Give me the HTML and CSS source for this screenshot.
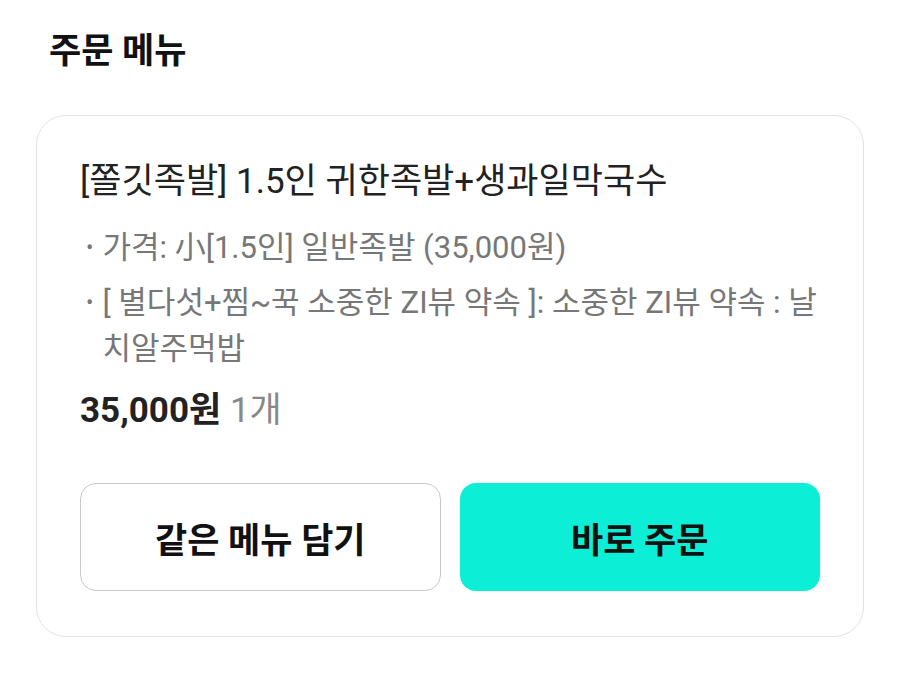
FILE: index.html
```html
<!DOCTYPE html>
<html lang="ko">
<head>
  <meta charset="UTF-8" />
  <meta name="viewport" content="width=device-width, initial-scale=1.0"/>
  <title>주문 메뉴</title>
  <link rel="stylesheet" href="styles.css">
</head>
<body>

<div class="page">
  <h2 class="section-title">주문 메뉴</h2>

  <div class="order-card">
    <div class="menu-name">[쫄깃족발] 1.5인 귀한족발+생과일막국수</div>

    <ul class="options">
      <li><span class="dot">•</span><span>가격: 小[1.5인] 일반족발 (35,000원)</span></li>
      <li><span class="dot">•</span><span>[ 별다섯+찜~꾹 소중한 ZI뷰 약속 ]: 소중한 ZI뷰 약속 : 날치알주먹밥</span></li>
    </ul>

    <div class="price">
      <strong>35,000원</strong> <span class="qty">1개</span>
    </div>

    <div class="actions">
      <button type="button" class="btn btn-outline">같은 메뉴 담기</button>
      <button type="button" class="btn btn-primary">바로 주문</button>
    </div>
  </div>
</div>

</body>
</html>
```

FILE: styles.css
```css
body {
  margin: 0;
  background: #fff;
  font-family: Roboto, "Noto Sans CJK KR", sans-serif;
  color: #222;
}

.page {
  padding: 30px 36px;
}

.section-title {
  margin: 0 0 41px 13px;
  font-size: 35px;
  font-weight: bold;
  line-height: 44px;
  color: #111;
}

.order-card {
  border: 1px solid #e2e2e2;
  border-radius: 30px;
  padding: 44px 43px 45px;
}

.menu-name {
  font-size: 35px;
  line-height: 44px;
  color: #222;
}

.options {
  list-style: none;
  margin: 21px 0 0;
  padding: 0;
  font-size: 31px;
  line-height: 46px;
  color: #777;
}

.options li {
  display: flex;
  gap: 9px;
  margin-bottom: 9px;
  padding-left: 6px;
}

.options li:last-child {
  margin-bottom: 0;
}

.options .dot {
  flex: none;
  font-size: 22px;
}

.price {
  margin-top: 17px;
  font-size: 35px;
  line-height: 44px;
}

.price strong {
  color: #222;
}

.price .qty {
  color: #888;
}

.actions {
  display: grid;
  grid-template-columns: 1fr 1fr;
  gap: 19px;
  margin-top: 50px;
}

.btn {
  height: 108px;
  border-radius: 16px;
  font-family: inherit;
  font-size: 35px;
  font-weight: bold;
  color: #111;
  cursor: pointer;
}

.btn-outline {
  background: #fff;
  border: 1px solid #c8c8c8;
}

.btn-primary {
  background: #0deed6;
  border: none;
}
```
